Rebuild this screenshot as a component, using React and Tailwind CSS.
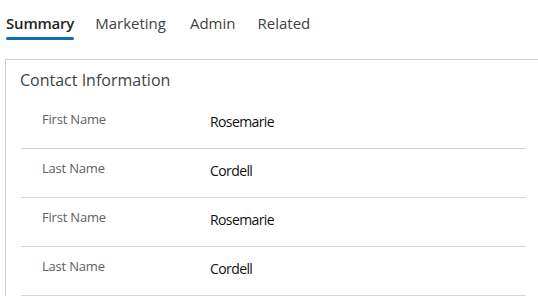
import React from 'react';

const tabs = [
    { name: 'Summary', gap: 'mr-[21px]' },
    { name: 'Marketing', gap: 'mr-[24px]' },
    { name: 'Admin', gap: 'mr-[22px]' },
    { name: 'Related', gap: '' },
];

const rows = [
    { label: 'First Name', value: 'Rosemarie' },
    { label: 'Last Name', value: 'Cordell' },
    { label: 'First Name', value: 'Rosemarie' },
    { label: 'Last Name', value: 'Cordell' },
];

const App = () => {
    return (
        <div className="w-[538px] h-[300px] overflow-hidden bg-white font-['Open_Sans',sans-serif]">
            {/* tab strip */}
            <nav className="flex h-[49px] pl-[6px]">
                {tabs.map((tab, i) => (
                    <div key={tab.name} className={`relative pt-[11px] ${tab.gap}`}>
                        <span className={`text-[15px] leading-[22px] ${i === 0 ? 'font-semibold tracking-[-0.2px] text-[#242424]' : 'tracking-[0px] text-[#424242]'}`}>
                            {tab.name}
                        </span>
                        {i === 0 && <div className="absolute left-0 right-0 top-[37px] h-[3px] rounded-full bg-[#0f6cbd]" />}
                    </div>
                ))}
            </nav>

            <section className="ml-[5px] mt-[10px] border-l border-t border-[#d1d1d1]">
                <h2 className="pl-[14px] pt-[9px] h-[40px] text-[16px] leading-[22px] tracking-[0px] text-[#424242]">
                    Contact Information
                </h2>
                <div className="pl-[15px] pr-[12px]">
                    {rows.map((row, i) => (
                        <div key={i} className="flex h-[49px] border-b border-[#d6d6d6]">
                            <div className="w-[189px] shrink-0 pl-[21px] pt-[9px] text-[13px] leading-[20px] tracking-[-0.2px] text-[#616161]">
                                {row.label}
                            </div>
                            <div className="pt-[12px] text-[14px] leading-[20px] tracking-[-0.6px] font-medium text-[#111]">
                                {row.value}
                            </div>
                        </div>
                    ))}
                </div>
            </section>
        </div>
    );
};

export default App;
